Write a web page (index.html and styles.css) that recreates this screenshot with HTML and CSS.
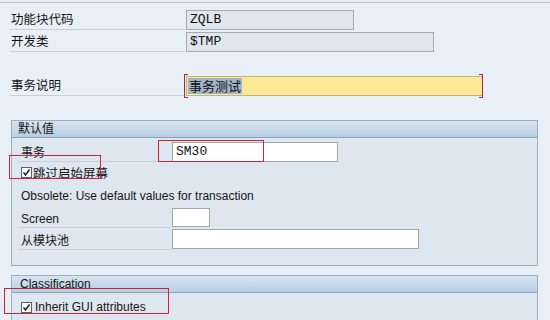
FILE: index.html
```html
<!DOCTYPE html>
<html lang="zh">
<head>
    <meta charset="UTF-8">
    <title>维护事务</title>
    <link rel="stylesheet" href="styles.css">
</head>
<body>
    <div class="screen">
        <div class="topline"></div>

        <div class="head-rows">
            <div class="row">
                <span class="label">功能块代码</span>
                <span class="field ro w-fm">ZQLB</span>
            </div>
            <div class="row">
                <span class="label">开发类</span>
                <span class="field ro w-pkg">$TMP</span>
            </div>
            <div class="row row-gap">
                <span class="label">事务说明</span>
                <span class="field req w-desc"><span class="sel">事务测试</span></span>
            </div>
        </div>

        <div class="group">
            <div class="group-head">默认值</div>
            <div class="group-body">
                <div class="grow">
                    <span class="glabel">事务</span>
                    <span class="field w-tx">SM30</span>
                </div>
                <div class="grow cb-row">
                    <span class="cb"><svg width="11" height="11" viewBox="0 0 11 11"><rect x="0.5" y="0.5" width="10" height="10" fill="#fff" stroke="#56606b"/><polyline points="2.5,5.5 4.5,8 8.5,2.5" fill="none" stroke="#1d2733" stroke-width="1.6"/></svg></span>
                    <span class="cb-text">跳过启始屏幕</span>
                </div>
                <div class="grow obs-row">
                    <span class="note">Obsolete: Use default values for transaction</span>
                </div>
                <div class="grow tall">
                    <span class="glabel">Screen</span>
                    <span class="field small w-scr"></span>
                </div>
                <div class="grow tall">
                    <span class="glabel">从模块池</span>
                    <span class="field w-pool"></span>
                </div>
            </div>
        </div>

        <div class="group group2">
            <div class="group-head">Classification</div>
            <div class="group-body2">
                <div class="grow cb-row2">
                    <span class="cb"><svg width="11" height="11" viewBox="0 0 11 11"><rect x="0.5" y="0.5" width="10" height="10" fill="#fff" stroke="#56606b"/><polyline points="2.5,5.5 4.5,8 8.5,2.5" fill="none" stroke="#1d2733" stroke-width="1.6"/></svg></span>
                    <span class="cb-text2">Inherit GUI attributes</span>
                </div>
                <div class="inner-box"></div>
            </div>
        </div>

        <!-- red annotation marks -->
        <div class="mark mark-tx"></div>
        <div class="mark mark-skip"></div>
        <div class="mark mark-gui"></div>
        <div class="bracket bracket-l"></div>
        <div class="bracket bracket-r"></div>
    </div>
</body>
</html>
```

FILE: styles.css
```css
body { margin: 0; background: #e9eff6; font-family: "Liberation Sans", "Noto Sans CJK SC", sans-serif; font-size: 12px; color: #151515; }
.screen { position: relative; width: 550px; height: 320px; overflow: hidden; padding-top: 2px; box-sizing: border-box; }
.topline { border-top: 1px solid #b7c1cc; }

.head-rows { padding-top: 7px; }
.row { display: flex; align-items: flex-start; height: 22px; }
.row-gap { margin-top: 22px; }
.label { box-sizing: border-box; width: 175px; height: 20px; margin-left: 10px; padding-left: 1px; line-height: 21px; border-bottom: 1px solid #c6cfd9; font-size: 12.5px; }

.field { box-sizing: border-box; display: block; height: 20px; margin-left: 1px; padding-left: 3px; border: 1px solid #9fa8b2; background: #fff; font-family: "Liberation Mono", "Noto Sans CJK SC", monospace; font-size: 13px; line-height: 18px; color: #111; }
.field.ro { background: #dfe6ee; border-color: #a3acb6; }
.field.req { background: #fde993; border-color: #bdb388; padding-left: 1px; font-family: "Noto Sans CJK SC", sans-serif; }
.field.small { height: 19px; }
.sel { background: #a4b4c9; color: #111; padding: 0 1px; line-height: 16px; display: inline-block; margin-top: 1px; }
.w-fm { width: 168px; }
.w-pkg { width: 248px; }
.w-desc { width: 297px; }
.w-tx { width: 166px; }
.w-scr { width: 38px; }
.w-pool { width: 247px; }

.group { box-sizing: border-box; width: 527px; margin: 22px 0 0 11px; border: 1px solid #9cadbf; background: #dee7f0; }
.group2 { margin-top: 9px; }
.group-head { height: 16px; line-height: 16px; padding-left: 6px; background: linear-gradient(#d7e4f1, #b8cee4); border-bottom: 1px solid #8ba3bc; }
.group2 .group-head { padding-left: 8px; }
.group-body { padding: 4px 0 15px; }
.group-body2 { padding-top: 1px; }

.grow { display: flex; align-items: center; height: 20px; }
.grow.tall { height: 22px; }
.glabel { box-sizing: border-box; width: 153px; height: 20px; margin-left: 6px; padding-left: 3px; line-height: 23px; border-bottom: 1px solid #c6cfd9; overflow: hidden; }
.tall .glabel { height: 21px; line-height: 24px; }
.cb-row { padding-left: 9px; }
.cb { display: flex; width: 11px; height: 11px; }
.cb-text { margin-left: 1px; font-family: "Noto Sans CJK SC", sans-serif; font-size: 12.5px; }
.obs-row { height: 24px; padding-left: 9px; padding-top: 3px; box-sizing: border-box; }
.cb-row2 { height: 26px; padding-left: 9px; }
.cb-text2 { margin-left: 3px; }
.inner-box { box-sizing: border-box; width: 510px; height: 20px; margin-left: 8px; border: 1px solid #a6b4c3; border-bottom: none; background: #e2eaf2; }

.mark { position: absolute; border: 1px solid #d0223a; }
.mark-tx { left: 158px; top: 140px; width: 104px; height: 20px; }
.mark-skip { left: 9px; top: 155px; width: 90px; height: 22px; }
.mark-gui { left: 4px; top: 288px; width: 163px; height: 24px; }

.bracket { position: absolute; top: 74px; width: 3px; height: 22px; border: 1px solid #a32a3c; }
.bracket-l { left: 184px; border-right: none; }
.bracket-r { left: 479px; border-left: none; }
```
